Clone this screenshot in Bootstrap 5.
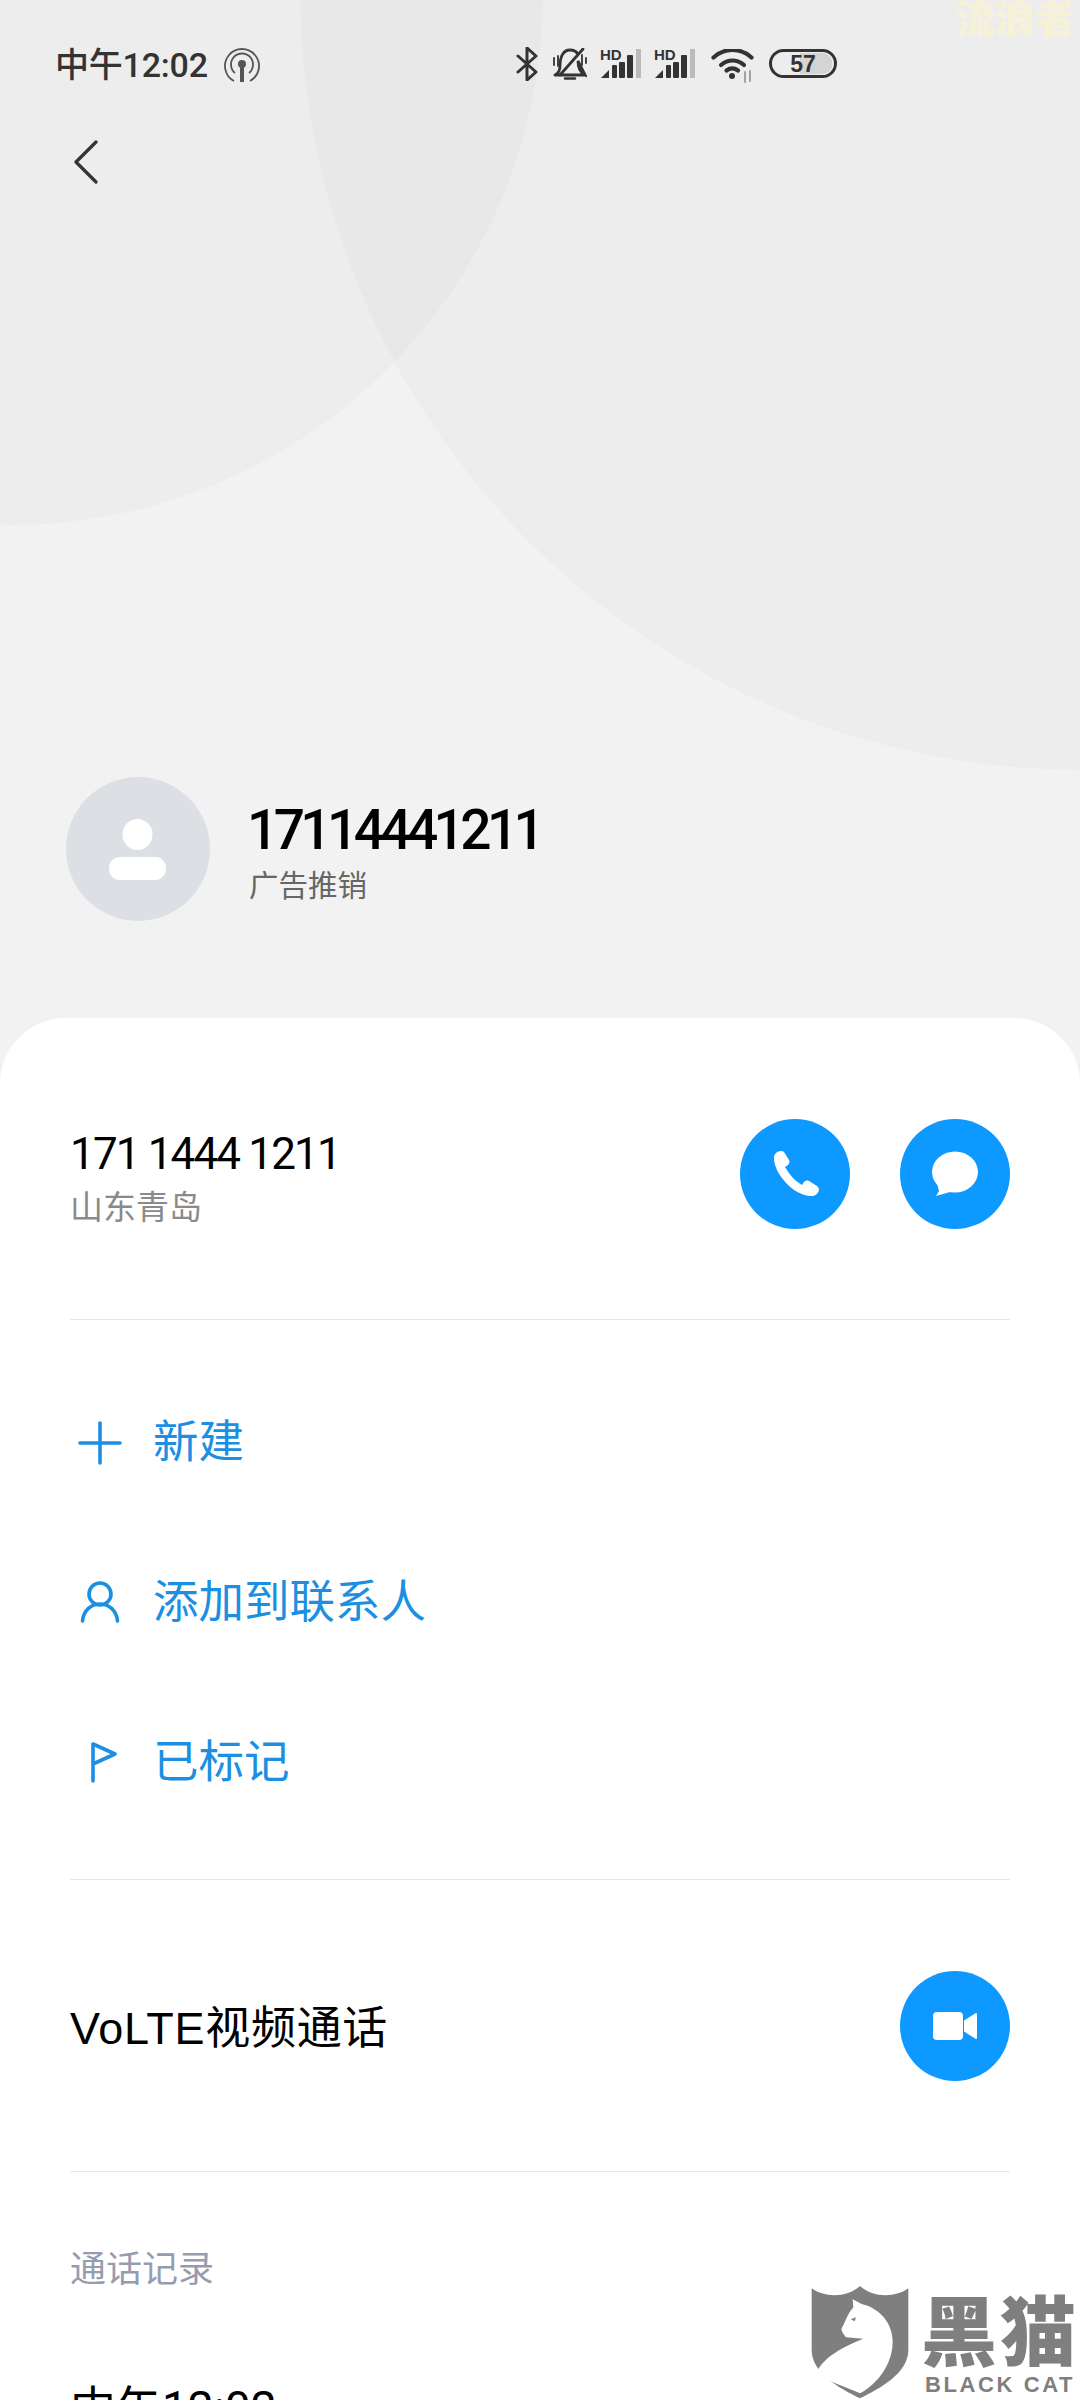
<!DOCTYPE html>
<html lang="zh-CN">
<head>
<meta charset="utf-8">
<title>17114441211</title>
<link href="https://cdn.jsdelivr.net/npm/bootstrap@5.3.0/dist/css/bootstrap.min.css" rel="stylesheet">
<style>
  html, body { margin: 0; height: 2400px; overflow: hidden; }
  body { width: 1080px; background: #f2f2f2; position: relative; font-family: Roboto, "Noto Sans CJK SC", sans-serif; color: #000; }
  .hero { height: 1018px; position: relative; overflow: hidden; }
  .hero-art { position: absolute; inset: 0; }
  .hero-flow { position: relative; }
  .status { height: 84px; padding-left: 55px; color: #333; }
  .status-time { font-size: 34px; font-weight: 500; line-height: 1; letter-spacing: -.2px; margin-top: 48px; width: 168px; }
  .status-right { margin-right: 243px; margin-top: 47px; }
  .status-right svg { display: block; flex: none; }
  .sig { position: relative; width: 41px; height: 31px; margin-top: 1px; flex: none; }
  .sig-hd { position: absolute; left: 0; top: -1px; font: 700 15px/1 "Liberation Sans", sans-serif; color: #333; }
  .back { margin: 56px 0 0 74px; height: 44px; }
  .who { position: absolute; left: 66px; top: 777px; }
  .avatar { width: 144px; height: 144px; border-radius: 50%; background: #dcdfe3; }
  .who-text { padding-top: 7px; }
  .who-name { font-size: 55px; font-weight: 500; line-height: 1; letter-spacing: -4.6px; margin-left: 37px; }
  .who-tag { font-size: 29.500px; color: #666; line-height: 1; margin: 14px 0 0 39px; }
  .sheet { background: #fff; border-radius: 66px 66px 0 0; padding: 0 70px; height: 1382px; }
  .sec-number { padding: 101px 0 90px; border-bottom: 1px solid #e6e6e6; }
  .num-main { font-size: 44px; line-height: 1; letter-spacing: -1.85px; margin-top: 13px; }
  .num-place { font-size: 33px; line-height: 1; color: #8a8a8a; margin-top: 15px; }
  .disc { width: 110px; height: 110px; padding: 0; border: 0; border-radius: 50%; background: #0d99ff; }
  .disc svg { display: block; }
  .disc-gap { gap: 50px; }
  .actions { padding: 42px 0 37px; border-bottom: 1px solid #e6e6e6; }
  .action-row { height: 160px; padding: 2px 0 0; border: 0; color: #1c8fe2; font-size: 45.500px; line-height: 1; background: transparent; }
  .action-icon { width: 60px; height: 60px; margin-right: 23px; flex: none; }
  .video-sec { padding: 91px 0 90px; border-bottom: 1px solid #e6e6e6; }
  .video-label { font-family: "Liberation Sans", "Noto Sans CJK SC", sans-serif; font-size: 45px; line-height: 1; padding-top: 4px; letter-spacing: .7px; }
  .log-head { font-size: 36px; line-height: 1; color: #959cb0; margin-top: 80px; }
  .log-time { font-size: 46px; line-height: 1; margin-top: 97px; }
  .roamer { position: absolute; left: 955px; top: -4px; font: 900 40px/40px "Noto Sans CJK SC", sans-serif; color: #f6f2d8; white-space: nowrap; }
  .brand { position: absolute; left: 780px; top: 2260px; width: 300px; height: 140px; }
  .brand svg { position: absolute; left: 0; top: 0; }
  .brand-cn { position: absolute; left: 141px; top: 22px; font: 900 76px/1.2 "Noto Sans CJK SC", sans-serif; color: #7f7f7f; white-space: nowrap; letter-spacing: 3px; }
  .brand-en { position: absolute; left: 145px; top: 112px; font: 700 22px/1.2 "Liberation Sans", sans-serif; color: #7f7f7f; white-space: nowrap; letter-spacing: 2.600px; }
</style>
</head>
<body>
  <div class="hero">
    <!-- two large soft discs behind the header -->
    <svg class="hero-art" width="1080" height="1018" viewBox="0 0 1080 1018">
      <rect width="1080" height="1018" fill="#f2f2f2"/>
      <circle cx="12" cy="-6" r="531" fill="#000" fill-opacity=".02"/>
      <circle cx="1080" cy="-10" r="780" fill="#000" fill-opacity=".02"/>
    </svg>
    <div class="hero-flow">
      <div class="status d-flex">
        <div class="status-time">中午12:02</div>
        <svg width="38" height="38" viewBox="0 0 38 38" fill="none" stroke="#555" style="margin-top:46px">
          <path d="M11 35a17 17 0 1 1 16 0" stroke-width="1.8"/>
          <path d="M12 27a11 11 0 1 1 14 0" stroke-width="1.8"/>
          <circle cx="19" cy="18" r="4" fill="#555" stroke="none"/>
          <path d="M19 20v16" stroke-width="4"/>
        </svg>
        <div class="status-right d-flex align-items-start ms-auto">
          <!-- bluetooth -->
          <svg width="22" height="34" viewBox="0 0 22 34" fill="none" stroke="#333" stroke-width="3" stroke-linejoin="round" stroke-linecap="round" style="margin-right:15px">
            <path d="M2 9l18 16-9 8V1l9 8L2 25"/>
          </svg>
          <!-- muted bell -->
          <svg width="34" height="32" viewBox="0 0 34 32" fill="none" stroke="#333" stroke-width="2.800" stroke-linecap="round" style="margin:1px 13px 0 0">
            <path d="M2 27c4-2 5-5 5-9 0-9 3-16 10-16 3 0 6 1 8 4M25 13c0 6 1 11 7 14zM2 27h30"/>
            <path d="M12 30.500h10" stroke-width="2.400"/>
            <path d="M7 27L30 1"/>
            <path d="M1 10v7M5 8v10M29 7v10M33 10v5" stroke-width="1.800"/>
          </svg>
          <div class="sig" style="margin-right:13px">
            <span class="sig-hd">HD</span>
            <svg width="41" height="31" viewBox="0 0 41 31">
              <path d="M1 30l8-8v8z" fill="#333"/>
              <rect x="12" y="17" width="5" height="13" rx="1" fill="#333"/>
              <rect x="19" y="14" width="6" height="16" rx="1" fill="#333"/>
              <rect x="27" y="7" width="6" height="23" rx="1" fill="#333"/>
              <rect x="36" y="1" width="5" height="29" fill="#bbb"/>
            </svg>
          </div>
          <div class="sig" style="margin-right:16px">
            <span class="sig-hd">HD</span>
            <svg width="41" height="31" viewBox="0 0 41 31">
              <path d="M1 30l8-8v8z" fill="#333"/>
              <rect x="12" y="17" width="5" height="13" rx="1" fill="#333"/>
              <rect x="19" y="14" width="6" height="16" rx="1" fill="#333"/>
              <rect x="27" y="7" width="6" height="23" rx="1" fill="#333"/>
              <rect x="36" y="1" width="5" height="29" fill="#bbb"/>
            </svg>
          </div>
          <!-- wifi with activity arrows -->
          <svg width="44" height="34" viewBox="0 0 44 34" fill="none" stroke="#333" stroke-width="4.200" stroke-linecap="round" style="margin:2px 14px 0 0">
            <path d="M2.500 8.500c11-10 27-10 38 0"/>
            <path d="M10 16c7-6 16-6 23 0"/>
            <path d="M15.500 21.500c3.500-2.500 8-2.500 11.500 0"/>
            <circle cx="21" cy="27" r="3" fill="#333" stroke="none"/>
            <path d="M34 23v10M39 22v10" stroke="#999" stroke-width="1.800"/>
          </svg>
          <!-- battery pill -->
          <svg width="68" height="29" viewBox="0 0 68 29" style="margin-top:2px">
            <path d="M31 4h22a10.500 10.500 0 0 1 0 21H31z" fill="#d4d4d4"/>
            <rect x="1.500" y="1.500" width="65" height="26" rx="13" fill="none" stroke="#333" stroke-width="3"/>
            <text x="34" y="23" text-anchor="middle" font-family="Liberation Sans, sans-serif" font-size="23" font-weight="700" fill="#333">57</text>
          </svg>
        </div>
      </div>
      <div class="back">
        <svg width="24" height="44" viewBox="0 0 24 44" fill="none" stroke="#333" stroke-width="3.200" stroke-linecap="round" stroke-linejoin="round" style="display:block">
          <path d="M22 2L2 22l20 20"/>
        </svg>
      </div>
    </div>
    <div class="who d-flex align-items-center">
      <div class="avatar flex-shrink-0 d-flex align-items-center justify-content-center">
        <svg width="58" height="61" viewBox="0 0 58 61">
          <ellipse cx="28.500" cy="15.500" rx="15" ry="15.500" fill="#fff"/>
          <rect x="0" y="38" width="57" height="23" rx="11" fill="#fff"/>
        </svg>
      </div>
      <div class="who-text">
        <div class="who-name">17114441211</div>
        <div class="who-tag">广告推销</div>
      </div>
    </div>
  </div>

  <div class="sheet">
    <div class="sec-number d-flex justify-content-between align-items-start">
      <div>
        <div class="num-main">171 1444 1211</div>
        <div class="num-place">山东青岛</div>
      </div>
      <div class="d-flex disc-gap">
        <button class="btn disc" type="button" aria-label="呼叫">
          <svg width="110" height="110" viewBox="0 0 110 110"><path fill="#fff" d="M41 32C37 32 34 35 34 39C34 55 54 77 71 77C75 77 78 75 79 71C79 69 78 68 77 67L69 62C67 61 65 62 64 63L62 66C55 62 49 55 45 48L48 46C49 45 50 43 49 41L44 33C43 32 42 32 41 32Z"/></svg>
        </button>
        <button class="btn disc" type="button" aria-label="短信">
          <svg width="110" height="110" viewBox="0 0 110 110"><ellipse cx="55" cy="53" rx="23" ry="20.500" fill="#fff"/><path fill="#fff" d="M37 64L39 72L36 77L50 73Z"/></svg>
        </button>
      </div>
    </div>

    <div class="list-group list-group-flush actions">
      <div class="list-group-item action-row d-flex align-items-center">
        <svg class="action-icon" viewBox="0 0 60 60" fill="none" stroke="#1c8fe2" stroke-width="3.600" stroke-linecap="round"><path d="M30 10v40M10 30h40"/></svg>
        新建
      </div>
      <div class="list-group-item action-row d-flex align-items-center">
        <svg class="action-icon" viewBox="0 0 60 60" fill="none" stroke="#1c8fe2" stroke-width="3.600" stroke-linecap="round"><circle cx="30" cy="21" r="11"/><path d="M12.500 48c1-11 9-17 17.500-17s16.500 6 17.500 17"/></svg>
        添加到联系人
      </div>
      <div class="list-group-item action-row d-flex align-items-center">
        <svg class="action-icon" viewBox="0 0 60 60" fill="none" stroke="#1c8fe2" stroke-width="3.600" stroke-linecap="round" stroke-linejoin="round"><path d="M23 11v37M23 11l22 10-22 10"/></svg>
        已标记
      </div>
    </div>

    <div class="video-sec d-flex justify-content-between align-items-center">
      <div class="video-label">VoLTE视频通话</div>
      <button class="btn disc" type="button" aria-label="视频通话">
        <svg width="110" height="110" viewBox="0 0 110 110"><rect x="33" y="41" width="30" height="28" rx="4" fill="#fff"/><path fill="#fff" stroke="#fff" stroke-width="2" stroke-linejoin="round" d="M65 50L76 43V67L65 60Z"/></svg>
      </button>
    </div>

    <div class="log-head">通话记录</div>
    <div class="log-time">中午12:02</div>
  </div>

  <div class="roamer">流浪者</div>

  <div class="brand">
    <svg width="300" height="140" viewBox="0 0 900 420">
      <path fill="#7f7f7f" d="M95 85C130 112 200 115 240 78C280 115 350 112 385 85V270C385 340 300 385 240 415C180 385 95 340 95 270Z"/>
      <path fill="#fff" d="M218 118L245 132C300 145 338 190 338 245C338 310 295 370 240 400C200 380 140 365 110 338C125 300 170 268 250 236L198 232C190 222 183 212 185 205C192 195 200 165 220 142Z"/>
      <path fill="#7f7f7f" d="M212 178L228 172L224 184Z"/>
    </svg>
    <span class="brand-cn">黑猫</span>
    <span class="brand-en">BLACK CAT</span>
  </div>
</body>
</html>
